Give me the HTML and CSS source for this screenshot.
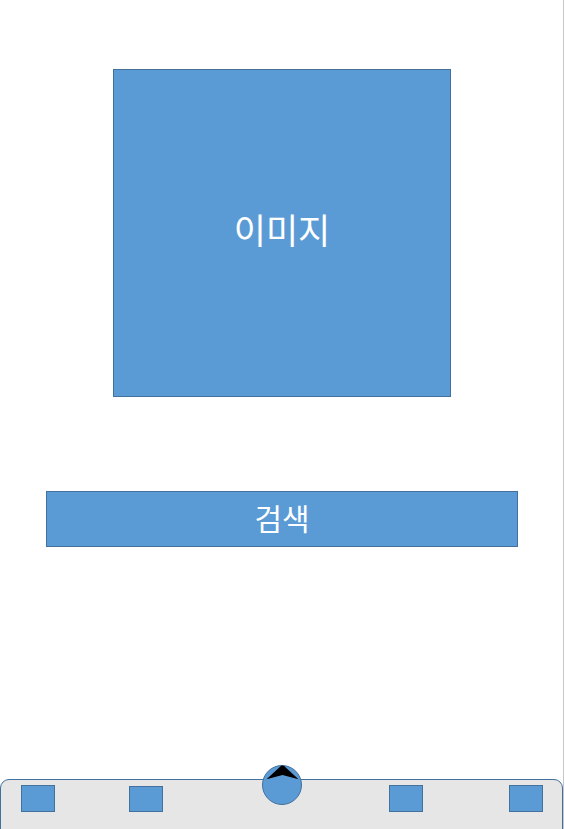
FILE: index.html
```html
<!DOCTYPE html>
<html lang="ko">
<head>
<meta charset="utf-8">
<title>검색</title>
<link rel="stylesheet" href="styles.css">
</head>
<body>
<div class="page">
  <div class="image-box">이미지</div>
  <div class="search-btn">검색</div>
  <nav class="tabbar">
    <span class="tab tab-1"></span>
    <span class="tab tab-2"></span>
    <span class="home">
      <svg width="40" height="40" viewBox="0 0 40 40">
        <defs><clipPath id="c"><circle cx="20" cy="20" r="19.5"/></clipPath></defs>
        <circle cx="20" cy="20" r="19.5" fill="#5b9bd5" stroke="#41719c" stroke-width="1"/>
        <polygon points="20.5,-0.5 36.5,14.2 20.5,10 4.5,14.2" fill="#000" clip-path="url(#c)"/>
      </svg>
    </span>
    <span class="tab tab-3"></span>
    <span class="tab tab-4"></span>
  </nav>
</div>
</body>
</html>
```
FILE: styles.css
```css
html, body {
  margin: 0;
  padding: 0;
  background: #ffffff;
}
.page {
  width: 563px;
  height: 829px;
  border-right: 1px solid #c8c8c8;
  display: flex;
  flex-direction: column;
  align-items: center;
  overflow: hidden;
  font-family: "Noto Sans CJK KR", "Noto Sans", sans-serif;
}
.image-box {
  box-sizing: border-box;
  margin-top: 69px;
  margin-left: 1px;
  width: 338px;
  height: 328px;
  background: #5b9bd5;
  border: 1px solid #41719c;
  color: #ffffff;
  font-size: 35px;
  display: flex;
  align-items: center;
  justify-content: center;
  padding-bottom: 10px;
}
.search-btn {
  box-sizing: border-box;
  margin-top: 94px;
  margin-left: 1px;
  width: 472px;
  height: 56px;
  background: #5b9bd5;
  border: 1px solid #41719c;
  color: #ffffff;
  font-size: 30px;
  display: flex;
  align-items: center;
  justify-content: center;
  padding-bottom: 5px;
}
.tabbar {
  box-sizing: border-box;
  margin-top: auto;
  align-self: stretch;
  height: 60px;
  margin-bottom: -10px;
  background: #e6e6e6;
  border: 1px solid #41719c;
  border-radius: 9px 9px 0 0;
  display: flex;
  align-items: flex-start;
}
.tab {
  box-sizing: border-box;
  width: 34px;
  height: 27px;
  margin-top: 5px;
  background: #5b9bd5;
  border: 1px solid #41719c;
}
.tab-1 { margin-left: 20px; }
.tab-2 { margin-left: 74px; margin-top: 6px; height: 26px; }
.home {
  width: 40px;
  height: 40px;
  margin-left: 99px;
  margin-top: -15px;
  display: block;
}
.home svg { display: block; }
.tab-3 { margin-left: 87px; }
.tab-4 { margin-left: 86px; }
```
